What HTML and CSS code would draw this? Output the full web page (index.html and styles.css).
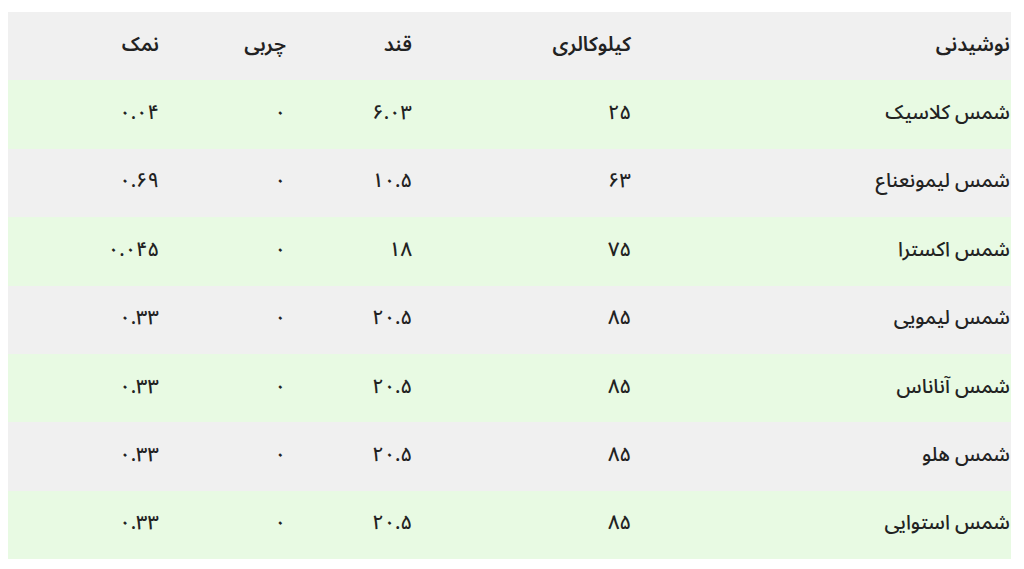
FILE: index.html
```html
<!DOCTYPE html>
<html lang="fa" dir="rtl">
<head>
<meta charset="utf-8">
<title>جدول نوشیدنی</title>
<link rel="stylesheet" href="styles.css">
</head>
<body>
<table class="nutrition">
  <colgroup>
    <col class="c-name"><col class="c-kcal"><col class="c-sugar"><col class="c-fat"><col class="c-salt">
  </colgroup>
  <thead>
    <tr><th>نوشیدنی</th><th>کیلوکالری</th><th>قند</th><th>چربی</th><th>نمک</th></tr>
  </thead>
  <tbody>
    <tr><td>شمس کلاسیک</td><td>۲۵</td><td>۶.۰۳</td><td>۰</td><td>۰.۰۴</td></tr>
    <tr><td>شمس لیمونعناع</td><td>۶۳</td><td>۱۰.۵</td><td>۰</td><td>۰.۶۹</td></tr>
    <tr><td>شمس اکسترا</td><td>۷۵</td><td>۱۸</td><td>۰</td><td>۰.۰۴۵</td></tr>
    <tr><td>شمس لیمویی</td><td>۸۵</td><td>۲۰.۵</td><td>۰</td><td>۰.۳۳</td></tr>
    <tr><td>شمس آناناس</td><td>۸۵</td><td>۲۰.۵</td><td>۰</td><td>۰.۳۳</td></tr>
    <tr><td>شمس هلو</td><td>۸۵</td><td>۲۰.۵</td><td>۰</td><td>۰.۳۳</td></tr>
    <tr><td>شمس استوایی</td><td>۸۵</td><td>۲۰.۵</td><td>۰</td><td>۰.۳۳</td></tr>
  </tbody>
</table>
</body>
</html>
```
FILE: styles.css
```css
html, body {
  margin: 0;
  padding: 0;
  background: #ffffff;
}
body {
  padding: 12px 13px 0 8px;
  font-family: "Noto Sans Arabic", "DejaVu Sans", sans-serif;
  color: #222222;
}
.nutrition {
  width: 1003px;
  border-collapse: collapse;
  table-layout: fixed;
  font-size: 20px;
}
.c-name { width: 379px; }
.c-kcal { width: 219px; }
.c-sugar { width: 126px; }
.c-fat { width: 127px; }
.c-salt { width: 152px; }
.nutrition th,
.nutrition td {
  height: 65.4px;
  padding: 0 1px 3px 0;
  line-height: 30px;
  text-align: right;
  vertical-align: middle;
  white-space: nowrap;
}
.nutrition th {
  font-weight: 600;
}
.nutrition td {
  font-weight: 500;
}
.nutrition thead tr,
.nutrition tbody tr:nth-child(even) {
  background: #f0f0f0;
}
.nutrition tbody tr:nth-child(odd) {
  background: #e8fae3;
}
```
